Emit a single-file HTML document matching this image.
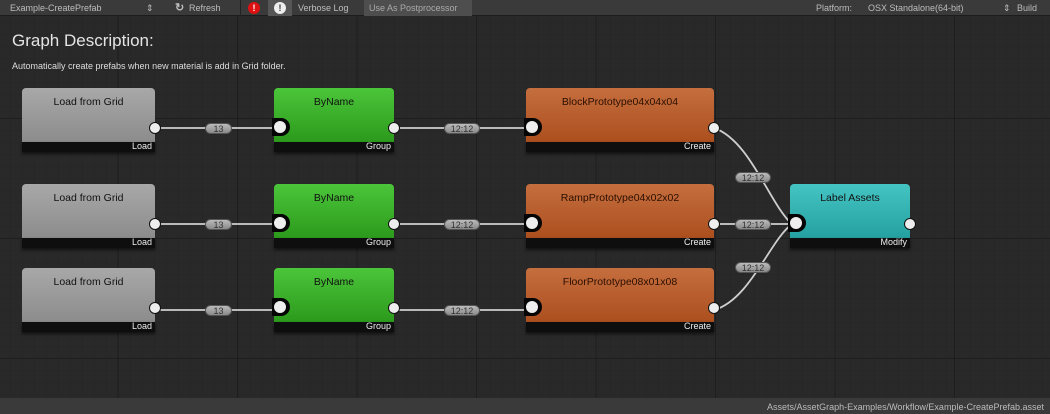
<!DOCTYPE html>
<html><head><style>
*{margin:0;padding:0;box-sizing:border-box}
body{width:1050px;height:414px;overflow:hidden;background:#292929;font-family:"Liberation Sans",sans-serif;position:relative}
.grid{position:absolute;left:0;top:16px;width:1050px;height:382px;
background-image:linear-gradient(#1e1e1e 1px,transparent 1px),linear-gradient(90deg,#1e1e1e 1px,transparent 1px),linear-gradient(rgba(0,0,0,.06) 1px,transparent 1px),linear-gradient(90deg,rgba(0,0,0,.06) 1px,transparent 1px);
background-size:119.5px 120px,119.5px 120px,12px 12px,12px 12px;background-position:-2px -18px,-2px -18px,-2px -18px,-2px -18px}
.tb{position:absolute;left:0;top:0;width:1050px;height:16px;background:#3a3a3a;border-bottom:1px solid #1c1c1c;font-size:9px;color:#bdbdbd}
.tb span{position:absolute;top:3px}
.status{position:absolute;left:0;top:398px;width:1050px;height:16px;background:#3a3a3a;font-size:9px;color:#bbb;text-align:right;padding:4px 6px 0 0}
h1{position:absolute;left:12px;top:31px;font-size:17px;font-weight:normal;color:#e4e4e4}
.desc{position:absolute;left:12px;top:61px;font-size:9px;color:#ddd}
.node{position:absolute;width:133px;height:64px}
.body{position:absolute;left:0;top:0;right:0;height:54px;border-radius:4px 4px 0 0;text-align:center;font-size:10.5px;padding-top:8px}
.bar{position:absolute;left:0;right:0;top:54px;height:10px;background:#0e0e0e;box-shadow:0 2px 3px rgba(0,0,0,.6)}
.bar i{position:absolute;right:3px;top:-1px;font-style:normal;font-size:9px;color:#eee}
.out{position:absolute;right:-6px;top:34px;width:12px;height:12px;border-radius:50%;background:#eee;border:1.5px solid #111}
.in{position:absolute;left:-2px;top:30px;width:18px;height:18px;border-radius:0 50% 50% 0;background:#050505}
.in::after{content:"";position:absolute;left:2px;top:3px;width:12px;height:12px;border-radius:50%;background:#eee}
.gray .body{background:linear-gradient(#a8a8a8,#8c8c8c);color:#111}
.green .body{background:linear-gradient(#4bc53a,#2c9a1c);color:#111}
.orange .body{background:linear-gradient(#c56e3e,#ac4f1f);color:#2a0f00}
.teal .body{background:linear-gradient(#45c4c4,#24a0a0);color:#111}
.lbl{position:absolute;height:11px;border-radius:6px;background:linear-gradient(#bbb,#8a8a8a);font-size:9px;color:#333;text-align:center;line-height:11px;border:1px solid #555}
</style></head><body>
<div class="grid"></div>
<div class="tb">
<span style="left:10px">Example-CreatePrefab</span><span style="left:146px">⇕</span>
<span style="left:175px;font-weight:bold;font-size:11px;top:1px">↻</span><span style="left:189px">Refresh</span>
<div style="position:absolute;left:240px;top:0;width:1px;height:16px;background:#222"></div>
<div style="position:absolute;left:248px;top:2px;width:12px;height:12px;border-radius:50%;background:#d11;color:#fff;font-size:9px;font-weight:bold;text-align:center;line-height:12px">!</div>
<div style="position:absolute;left:268px;top:0;width:24px;height:16px;background:#555"></div>
<div style="position:absolute;left:274px;top:2px;width:12px;height:12px;border-radius:50%;background:#eee;color:#333;font-size:9px;font-weight:bold;text-align:center;line-height:12px">!</div>
<span style="left:298px">Verbose Log</span>
<div style="position:absolute;left:364px;top:0;width:108px;height:16px;background:#4e4e4e"></div>
<span style="left:369px;color:#aaa">Use As Postprocessor</span>
<span style="left:816px">Platform:</span><span style="left:868px">OSX Standalone(64-bit)</span><span style="left:1003px">⇕</span><span style="left:1017px">Build</span>
</div>
<h1>Graph Description:</h1>
<div class="desc">Automatically create prefabs when new material is add in Grid folder.</div>
<svg width="1050" height="414" style="position:absolute;left:0;top:0">
<g stroke="#cfcfcf" stroke-width="1.8" fill="none">
<path d="M155 128H276"/><path d="M155 224H276"/><path d="M155 310H276"/>
<path d="M394 128H528"/><path d="M394 224H528"/><path d="M394 310H528"/>
<path d="M714 128C750 140 770 205 792 224"/><path d="M714 224H792"/><path d="M714 310C750 300 770 240 792 224"/>
</g></svg>
<div class="lbl" style="left:205px;top:123px;width:27px">13</div>
<div class="lbl" style="left:205px;top:219px;width:27px">13</div>
<div class="lbl" style="left:205px;top:305px;width:27px">13</div>
<div class="lbl" style="left:444px;top:123px;width:36px">12:12</div>
<div class="lbl" style="left:444px;top:219px;width:36px">12:12</div>
<div class="lbl" style="left:444px;top:305px;width:36px">12:12</div>
<div class="lbl" style="left:735px;top:172px;width:36px">12:12</div>
<div class="lbl" style="left:735px;top:219px;width:36px">12:12</div>
<div class="lbl" style="left:735px;top:262px;width:36px">12:12</div>

<div class="node gray" style="left:22px;top:88px"><div class="body">Load from Grid</div><div class="bar"><i>Load</i></div><div class="out"></div></div>
<div class="node gray" style="left:22px;top:184px"><div class="body">Load from Grid</div><div class="bar"><i>Load</i></div><div class="out"></div></div>
<div class="node gray" style="left:22px;top:268px"><div class="body">Load from Grid</div><div class="bar"><i>Load</i></div><div class="out"></div></div>

<div class="node green" style="left:274px;top:88px;width:120px"><div class="body">ByName</div><div class="bar"><i>Group</i></div><div class="in"></div><div class="out"></div></div>
<div class="node green" style="left:274px;top:184px;width:120px"><div class="body">ByName</div><div class="bar"><i>Group</i></div><div class="in"></div><div class="out"></div></div>
<div class="node green" style="left:274px;top:268px;width:120px"><div class="body">ByName</div><div class="bar"><i>Group</i></div><div class="in"></div><div class="out"></div></div>

<div class="node orange" style="left:526px;top:88px;width:188px"><div class="body">BlockPrototype04x04x04</div><div class="bar"><i>Create</i></div><div class="in"></div><div class="out"></div></div>
<div class="node orange" style="left:526px;top:184px;width:188px"><div class="body">RampPrototype04x02x02</div><div class="bar"><i>Create</i></div><div class="in"></div><div class="out"></div></div>
<div class="node orange" style="left:526px;top:268px;width:188px"><div class="body">FloorPrototype08x01x08</div><div class="bar"><i>Create</i></div><div class="in"></div><div class="out"></div></div>

<div class="node teal" style="left:790px;top:184px;width:120px"><div class="body">Label Assets</div><div class="bar"><i>Modify</i></div><div class="in"></div><div class="out"></div></div>

<div class="status">Assets/AssetGraph-Examples/Workflow/Example-CreatePrefab.asset</div>
</body></html>
